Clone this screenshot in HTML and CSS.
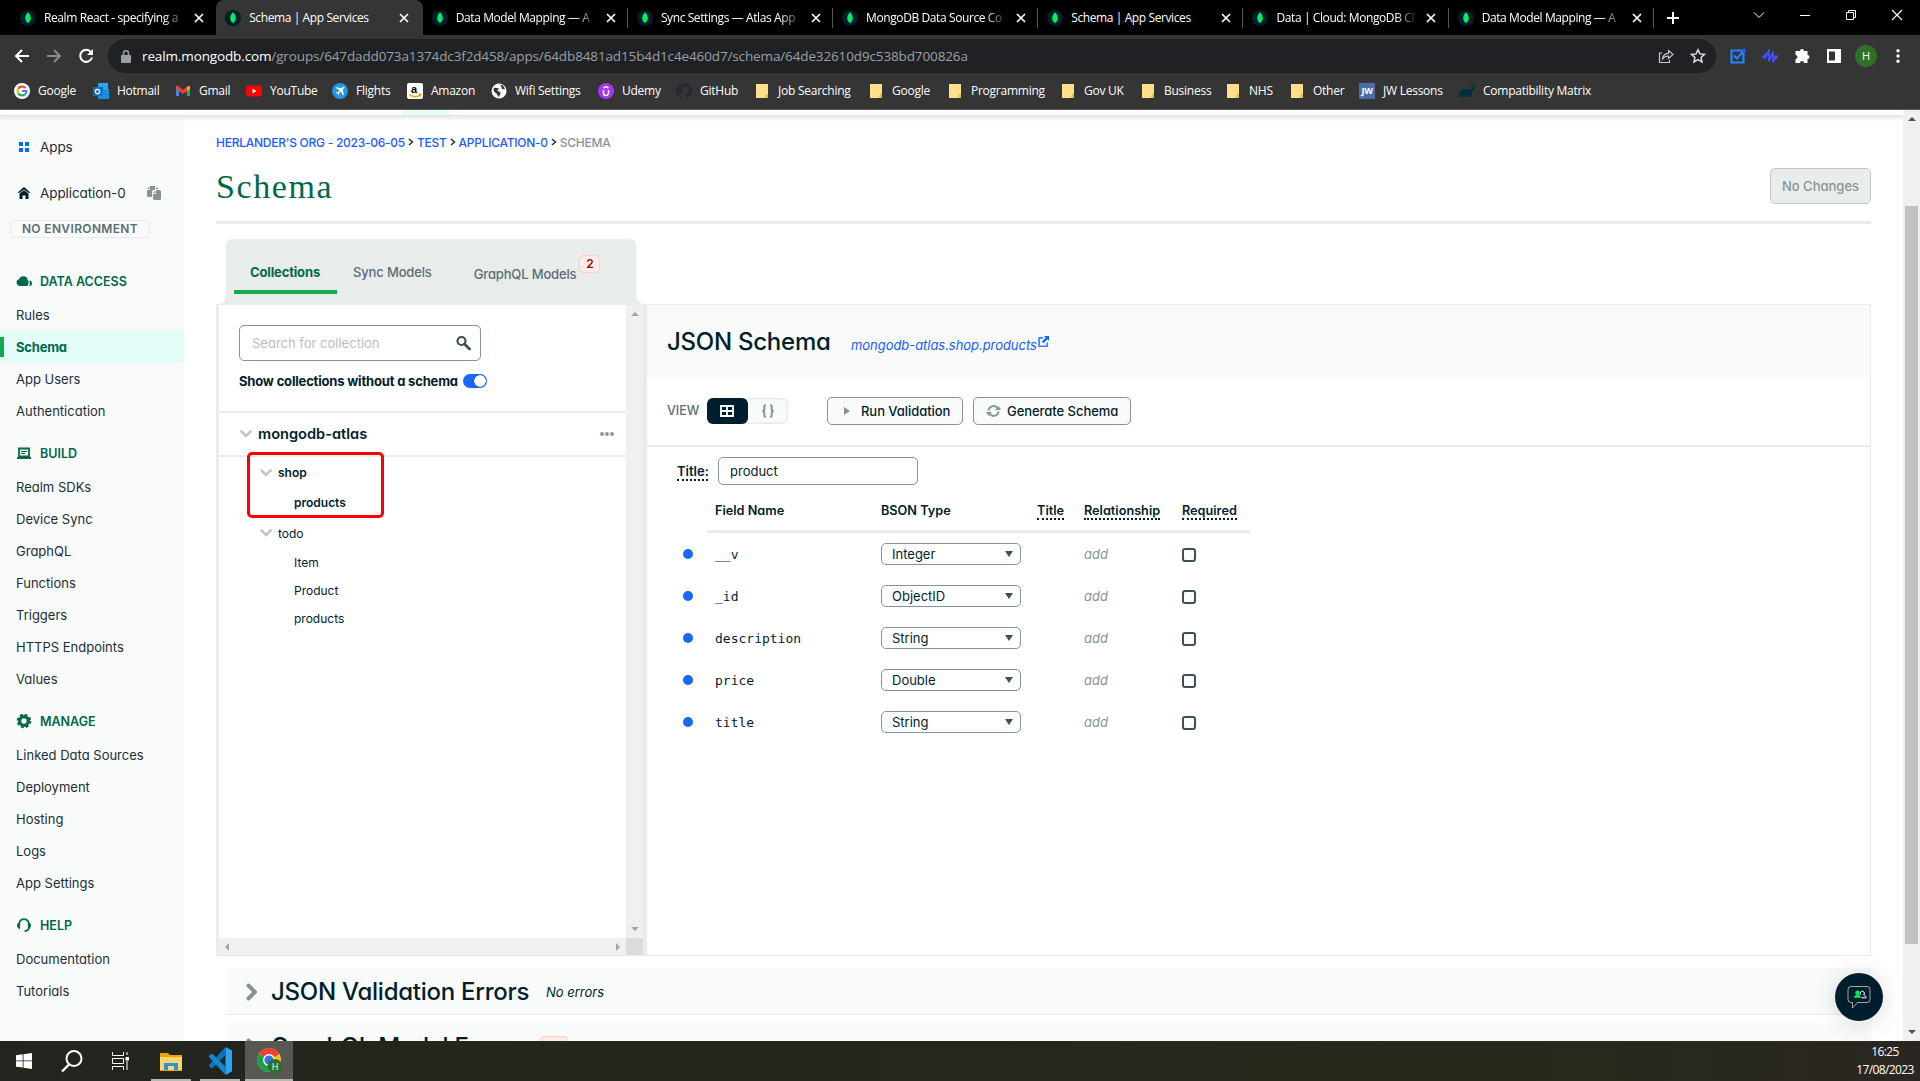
FILE: index.html
```html
<!DOCTYPE html>
<html lang="en">
<head>
  <meta charset="UTF-8">
  <meta name="viewport" content="width=device-width, initial-scale=1.0">
  <title>Schema | App Services</title>
  <link rel="stylesheet" href="styles.css">
</head>
<body>
  <!-- shared icons -->
  <svg width="0" height="0" class="defs">
    <symbol id="leaf" viewBox="0 0 16 16"><circle cx="8" cy="8" r="8" fill="#001e2b"/><path d="M8 2.200C6.300 4 5.200 5.800 5.200 8.200c0 2 1.100 3.500 2.500 4.500l.3 1.300.3-1.300c1.400-1 2.500-2.500 2.500-4.500C10.800 5.800 9.700 4 8 2.200z" fill="#00ed64"/></symbol>
    <symbol id="x" viewBox="0 0 10 10"><path d="M1 1l8 8M9 1l-8 8" stroke="#fff" stroke-width="1.700"/></symbol>
    <symbol id="note" viewBox="0 0 16 16"><path d="M2 1h12v14H2z" fill="#ffe08a"/><path d="M12 11h2v4h-3z" fill="#e6b94a"/></symbol>
    <symbol id="chev" viewBox="0 0 12 8"><path d="M1.500 1.500L6 6l4.500-4.500" fill="none" stroke="#c1c7c6" stroke-width="2.600" stroke-linecap="round"/></symbol>
    <symbol id="right" viewBox="0 0 12 18"><path d="M2.500 2.500L9 9l-6.500 6.500" fill="none" stroke="#889397" stroke-width="4" stroke-linecap="round" stroke-linejoin="round"/></symbol>
  </svg>

  <div class="tabstrip">
    <div class="tab"><svg class="fav"><use href="#leaf"/></svg><span class="tab-title">Realm React - specifying a</span><svg class="tab-x"><use href="#x"/></svg></div>
    <div class="tab active"><svg class="fav"><use href="#leaf"/></svg><span class="tab-title full">Schema | App Services</span><svg class="tab-x"><use href="#x"/></svg></div>
    <div class="tab sep"><svg class="fav"><use href="#leaf"/></svg><span class="tab-title">Data Model Mapping — A</span><svg class="tab-x"><use href="#x"/></svg></div>
    <div class="tab sep"><svg class="fav"><use href="#leaf"/></svg><span class="tab-title">Sync Settings — Atlas App</span><svg class="tab-x"><use href="#x"/></svg></div>
    <div class="tab sep"><svg class="fav"><use href="#leaf"/></svg><span class="tab-title">MongoDB Data Source Co</span><svg class="tab-x"><use href="#x"/></svg></div>
    <div class="tab sep"><svg class="fav"><use href="#leaf"/></svg><span class="tab-title full">Schema | App Services</span><svg class="tab-x"><use href="#x"/></svg></div>
    <div class="tab sep"><svg class="fav"><use href="#leaf"/></svg><span class="tab-title">Data | Cloud: MongoDB Cl</span><svg class="tab-x"><use href="#x"/></svg></div>
    <div class="tab sep"><svg class="fav"><use href="#leaf"/></svg><span class="tab-title">Data Model Mapping — A</span><svg class="tab-x"><use href="#x"/></svg></div>
    <svg class="plus" viewBox="0 0 14 14"><path d="M7 1v12M1 7h12" stroke="#fff" stroke-width="2"/></svg>
    <div class="win-buttons">
      <svg viewBox="0 0 12 12"><path d="M1 3.500l5 5 5-5" fill="none" stroke="#fff"/></svg>
      <svg viewBox="0 0 12 12"><path d="M1 6.500h10" stroke="#fff"/></svg>
      <svg viewBox="0 0 12 12"><path d="M1.500 3.500h7v7h-7zM3.500 3.500v-2h7v7h-2" fill="none" stroke="#fff"/></svg>
      <svg viewBox="0 0 12 12"><path d="M1 1l10 10M11 1L1 11" stroke="#fff" stroke-width="1.200"/></svg>
    </div>
  </div>

  <div class="toolbar">
    <svg class="nav-icon" viewBox="0 0 16 16"><path d="M15 8H2M8 2L2 8l6 6" fill="none" stroke="#fff" stroke-width="2"/></svg>
    <svg class="nav-icon" viewBox="0 0 16 16"><path d="M1 8h13M8 2l6 6-6 6" fill="none" stroke="#8a8a8a" stroke-width="2"/></svg>
    <svg class="nav-icon" viewBox="0 0 16 16"><path d="M13 4.200A6 6 0 1 0 14 9.500" fill="none" stroke="#fff" stroke-width="2"/><path d="M15 1v6H9z" fill="#fff"/></svg>
    <div class="omnibox">
      <svg width="10" height="13" viewBox="0 0 10 13"><path d="M1 5h8a1 1 0 0 1 1 1v6a1 1 0 0 1-1 1H1a1 1 0 0 1-1-1V6a1 1 0 0 1 1-1z" fill="#9aa0a6"/><path d="M2.500 6V3.300a2.500 2.500 0 0 1 5 0V6" fill="none" stroke="#9aa0a6" stroke-width="1.500"/></svg>
      <div class="url"><b>realm.mongodb.com</b>/groups/647dadd073a1374dc3f2d458/apps/64db8481ad15b4d1c4e460d7/schema/64de32610d9c538bd700826a</div>
      <svg width="16" height="16" viewBox="0 0 16 16"><path d="M4 5H1.500v9.500h10V12M4.500 11c.3-3.500 2.500-5.500 6-5.700V2.500L15 6.500l-4.500 4V8c-2.500 0-4.500.8-6 3z" fill="none" stroke="#c4c7c5" stroke-width="1.200"/></svg>
      <svg width="16" height="16" viewBox="0 0 16 16"><path d="M8 1.800l1.900 4.100 4.500.5-3.300 3.100.9 4.500L8 11.700 4 14l.9-4.500L1.600 6.400l4.500-.5z" fill="none" stroke="#dadce0" stroke-width="1.500"/></svg>
    </div>
    <div class="extensions">
      <svg viewBox="0 0 16 16"><path d="M1.500 2.500h12v12h-12z" fill="none" stroke="#2684ff" stroke-width="2.200"/><path d="M4 7.500l3 3 7-8" fill="none" stroke="#2684ff" stroke-width="2.200"/><circle cx="14" cy="2.500" r="2" fill="#2456ff"/></svg>
      <svg viewBox="0 0 16 16"><path d="M1 9.500L3.500 6v4L7 2v11l4-9v10l2.500-6v3L15.500 8" fill="none" stroke="#4353ff" stroke-width="1.700" stroke-linejoin="round" stroke-linecap="round"/></svg>
      <svg viewBox="0 0 16 16"><path d="M6 3a2 2 0 0 1 4 0h3.500v4a2 2 0 0 1 0 4v4H10a2 2 0 0 0-4 0H1.500v-4a2 2 0 0 0 0-4V3z" fill="#fff"/></svg>
      <svg viewBox="0 0 16 16"><path d="M1 1h14v14H1z" fill="#fff"/><path d="M3 3.500h6v9H3z" fill="#353535"/></svg>
      <span class="avatar">H</span>
      <svg viewBox="0 0 16 16"><g fill="#fff"><circle cx="8" cy="2.800" r="1.700"/><circle cx="8" cy="8" r="1.700"/><circle cx="8" cy="13.200" r="1.700"/></g></svg>
    </div>
  </div>

  <div class="bookmarks">
    <div><svg viewBox="0 0 16 16"><circle cx="8" cy="8" r="8" fill="#fff"/><g fill="none" stroke-width="2.200"><path d="M11.400 5A4.500 4.500 0 0 0 4.200 5.700" stroke="#ea4335"/><path d="M4.200 5.700a4.500 4.500 0 0 0 0 4.600" stroke="#fbbc05"/><path d="M4.200 10.300a4.500 4.500 0 0 0 6.700 1.100" stroke="#34a853"/><path d="M10.900 11.400A4.500 4.500 0 0 0 12.500 8H8" stroke="#4285f4"/></g></svg>Google</div>
    <div><svg viewBox="0 0 16 16"><path d="M5 0h10v7H5z" fill="#28a8ea"/><path d="M5 4h5v4H5z" fill="#0364b8"/><path d="M4 9l12-3v10H5z" fill="#1490df"/><path d="M0 4h9v9H0z" fill="#0f6cbd"/><circle cx="4.500" cy="8.500" r="2.200" fill="none" stroke="#fff" stroke-width="1.300"/></svg>Hotmail</div>
    <div><svg viewBox="0 0 16 16"><path d="M1 4h3v9H1z" fill="#4285f4"/><path d="M12 4h3v9h-3z" fill="#34a853"/><path d="M1 3l1.500-.5L8 7l5.500-4.500L15 3v3L8 11 1 6z" fill="#ea4335"/><path d="M12 4.200L15 3v3l-3 2z" fill="#fbbc04"/></svg>Gmail</div>
    <div><svg viewBox="0 0 16 16"><rect y="2.500" width="16" height="11" rx="3" fill="#f00"/><path d="M6.500 5.500v5l4-2.500z" fill="#fff"/></svg>YouTube</div>
    <div><svg viewBox="0 0 16 16"><circle cx="8" cy="8" r="8" fill="#2196e3"/><path d="M12.500 3.500c-1-.3-1.500.3-3 1.800l-5-1-.8.800 3.800 2.200-1.700 1.900-1.500-.2-.6.600 1.900.9.900 1.900.6-.6-.200-1.500 1.900-1.700 2.200 3.800.8-.8-1-5c1.500-1.500 2-2.200 1.700-3.100z" fill="#fff"/></svg>Flights</div>
    <div><svg viewBox="0 0 16 16"><rect width="16" height="16" rx="2" fill="#fff"/><text x="4" y="10" class="az">a</text><path d="M2 11.500c4 2.800 8 2.800 11 .5M11.500 11.500l2.200-.2-.7 2.200" fill="none" stroke="#f90" stroke-width="1.300"/></svg>Amazon</div>
    <div><svg viewBox="0 0 16 16"><circle cx="8" cy="8" r="7.500" fill="#fff"/><path d="M3 5c2-.5 3 .5 4.500 0 .5 1.500-1 1.500-1 3 1 .5 3 .5 3 2.200 0 1.500-1.500 1.800-1.500 3.800-1.500-.5-1.500-3-2.500-3.500S3.500 9.500 2.500 7zM9.500 1.500c0 1.500 1 1.500 1 3s1.500 2 3.500 1.500L12 2.500z" fill="#353535"/></svg>Wifi Settings</div>
    <div><svg viewBox="0 0 16 16"><circle cx="8" cy="8" r="8" fill="#a435f0"/><path d="M5.500 7v3a2.500 2.500 0 0 0 5 0V7M5.500 5L8 3.500 10.500 5" fill="none" stroke="#fff" stroke-width="1.500"/></svg>Udemy</div>
    <div><svg viewBox="0 0 16 16"><path d="M8 0a8 8 0 0 0-2.500 15.600v-3C3.500 13 3 11.500 3 11.500M8 0a8 8 0 0 1 2.500 15.600v-3.400c0-1-.3-1.400-.3-1.400 2-.3 3-1.300 3-3.300 0-1-.5-1.800-.9-2.200V3.400l-2 .8a7 7 0 0 0-4.600 0l-2-.8v1.900c-.4.400-.9 1.200-.9 2.200 0 2 1 3 3 3.300z" fill="#24292f"/></svg>GitHub</div>
    <div><svg><use href="#note"/></svg>Job Searching</div>
    <div><svg><use href="#note"/></svg>Google</div>
    <div><svg><use href="#note"/></svg>Programming</div>
    <div><svg><use href="#note"/></svg>Gov UK</div>
    <div><svg><use href="#note"/></svg>Business</div>
    <div><svg><use href="#note"/></svg>NHS</div>
    <div><svg><use href="#note"/></svg>Other</div>
    <div><span class="jw">JW</span>JW Lessons</div>
    <div><svg viewBox="0 0 16 16"><path d="M0 14c0-5 2-8 6-8 2 0 3 .5 4.500.5C12.500 6.500 14 5.500 14 4c0-1-1.500-1-1.500 0L11.300 3.500C11.500 1.500 16 1.500 16 4.500 16 7.500 13.500 8 13 10v4h-2l-.5-2-1 2h-2L7 12l-1.500 2h-2L3 12l-1.500 2z" fill="#02303a"/></svg>Compatibility Matrix</div>
  </div>

  <div class="page">
    <div class="viewport">
      <div class="topnav"><span class="topnav-active"></span></div>

      <div class="columns">
        <nav class="sidebar">
          <div class="side-top apps">
            <svg width="16" height="16" viewBox="0 0 16 16"><path d="M3 3h4v4H3zM9 3h4v4H9zM3 9h4v4H3zM9 9h4v4H9z" fill="#016bf8"/></svg>Apps
          </div>
          <div class="side-top application">
            <svg width="16" height="16" viewBox="0 0 16 16"><path d="M8 2l6 5.300-.8 1L8 4.500 2.800 8.300l-.8-1z" fill="#001e2b"/><path d="M8 5.200L12.500 8.500V14h-3v-3.500h-3V14h-3V8.500z" fill="#001e2b"/></svg>Application-0
            <svg class="copy" width="16" height="16" viewBox="0 0 16 16"><path d="M4 1h5v4H7.500A1.500 1.500 0 0 0 6 6.500V12H2.500A1.500 1.500 0 0 1 1 10.500V5h3z" fill="#889397"/><path d="M1 4l2.500-2.500V4z" fill="#889397"/><path d="M10 5h3.500A1.500 1.500 0 0 1 15 6.500v7a1.500 1.500 0 0 1-1.500 1.500h-5A1.500 1.500 0 0 1 7 13.500V9h3z" fill="#889397"/><path d="M7 8l2.300-2.500V8zM10 2l3 2h-3z" fill="#889397"/></svg>
          </div>
          <div class="env">NO ENVIRONMENT</div>

          <h4><svg viewBox="0 0 16 16"><path d="M3.500 13A3.500 3.500 0 0 1 3 6.200 4.500 4.500 0 0 1 11.700 7c1 1 1 1.500.8 3.500L11.500 13z" fill="#00684a"/><path d="M13 7.500c2 0 3 1.200 3 3S15 13 13 13c1-1.800 1-3.500 0-5.500z" fill="#00684a"/></svg>DATA ACCESS</h4>
          <a>Rules</a>
          <a class="current">Schema</a>
          <a>App Users</a>
          <a>Authentication</a>

          <h4><svg viewBox="0 0 16 16"><path d="M3 3.500h10v8H3z" fill="none" stroke="#00684a" stroke-width="1.800"/><path d="M1 12h14v2H1zM5 6h6v1H5zM5 8h4v1H5z" fill="#00684a"/></svg>BUILD</h4>
          <a>Realm SDKs</a>
          <a>Device Sync</a>
          <a>GraphQL</a>
          <a>Functions</a>
          <a>Triggers</a>
          <a>HTTPS Endpoints</a>
          <a>Values</a>

          <h4><svg viewBox="0 0 16 16"><circle cx="8" cy="8" r="4.300" fill="none" stroke="#00684a" stroke-width="3.200"/><circle cx="8" cy="8" r="6.300" fill="none" stroke="#00684a" stroke-width="2" stroke-dasharray="2.800 2.150"/></svg>MANAGE</h4>
          <a>Linked Data Sources</a>
          <a>Deployment</a>
          <a>Hosting</a>
          <a>Logs</a>
          <a>App Settings</a>

          <h4><svg viewBox="0 0 16 16"><path d="M3.500 8.500a4.800 4.800 0 1 1 9 0" fill="none" stroke="#00684a" stroke-width="1.800"/><path d="M1 8c0-2 1.500-2 3-1.500v5.500C2.500 12 1 10.500 1 8zM15 8c0-2-1.500-2-3-1.500v5.500c1.500 0 3-1.500 3-4z" fill="#00684a"/><path d="M13 11c-.5 2-2 3-4.500 3" fill="none" stroke="#00684a" stroke-width="1.600"/></svg>HELP</h4>
          <a>Documentation</a>
          <a>Tutorials</a>
        </nav>

        <main>
          <div class="crumbs"><a>HERLANDER'S ORG - 2023-06-05</a><svg viewBox="0 0 6 8"><path d="M1 1l3.500 3L1 7" fill="none" stroke="#21313c" stroke-width="1.500"/></svg><a>TEST</a><svg viewBox="0 0 6 8"><path d="M1 1l3.500 3L1 7" fill="none" stroke="#21313c" stroke-width="1.500"/></svg><a>APPLICATION-0</a><svg viewBox="0 0 6 8"><path d="M1 1l3.500 3L1 7" fill="none" stroke="#21313c" stroke-width="1.500"/></svg><span>SCHEMA</span></div>
          <div class="title-row">
            <h1>Schema</h1>
            <button class="no-changes" disabled>No Changes</button>
          </div>

          <div class="model-tabs">
            <span class="model-tab on">Collections</span>
            <span class="model-tab">Sync Models</span>
            <span class="model-tab graphql">GraphQL Models<i class="count">2</i></span>
          </div>

          <div class="panel">
            <div class="tree">
              <div class="tree-body">
                <div class="tree-head">
                  <div class="search">Search for collection
                    <svg width="16" height="16" viewBox="0 0 16 16"><circle cx="6.500" cy="6" r="4" fill="none" stroke="#3d4f58" stroke-width="2.200"/><path d="M9.500 9l5 5" stroke="#3d4f58" stroke-width="2.800" stroke-linecap="round"/></svg>
                  </div>
                  <div class="show-row"><span>Show collections without a schema</span><i class="switch"></i></div>
                </div>
                <div class="source"><svg class="chev"><use href="#chev"/></svg><span>mongodb-atlas</span>
                  <svg class="dots" width="14" height="4" viewBox="0 0 14 4"><g fill="#889397"><circle cx="2" cy="2" r="1.900"/><circle cx="7" cy="2" r="1.900"/><circle cx="12" cy="2" r="1.900"/></g></svg>
                </div>
                <div class="highlight"></div>
                <div class="db strong"><svg class="chev"><use href="#chev"/></svg>shop</div>
                <div class="coll strong first">products</div>
                <div class="db"><svg class="chev"><use href="#chev"/></svg>todo</div>
                <div class="coll">Item</div>
                <div class="coll">Product</div>
                <div class="coll">products</div>
              </div>
              <div class="vscroll"><i class="up"></i><i class="down"></i></div>
              <div class="hscroll"><i class="left"></i><i class="rightward"></i></div>
              <div class="corner"></div>
            </div>

            <section class="schema">
              <header>
                <h2>JSON Schema</h2>
                <a class="ns">mongodb-atlas.shop.products</a>
                <svg class="ext" viewBox="0 0 10 10"><path d="M4.500 1.700H1v7.600h7.400V6" fill="none" stroke="#3d7cf5" stroke-width="1.500"/><path d="M5.500 0H10v4.500L8.500 3 5 6.500 3.500 5 7 1.500z" fill="#016bf8"/></svg>
              </header>
              <div class="actions">
                <span class="view-label">VIEW</span>
                <div class="segmented">
                  <span class="seg on"><svg width="14" height="12" viewBox="0 0 14 12"><path d="M1 1h12v10H1zM7 1v10M1 6h12" fill="none" stroke="#fff" stroke-width="1.800"/></svg></span>
                  <span class="seg"><svg width="14" height="14" viewBox="0 0 14 14"><path d="M5 1.200C2.500 1 3.500 3 3.300 5.300 3.200 6.500 2.300 7 1.300 7c1 0 1.900.5 2 1.700C3.500 11 2.500 13 5 12.800M9 1.200c2.500-.2 1.500 1.800 1.700 4.100C10.800 6.500 11.700 7 12.700 7c-1 0-1.900.5-2 1.700-.2 2.300.8 4.300-1.700 4.100" fill="none" stroke="#889397" stroke-width="2"/></svg></span>
                </div>
                <button class="run"><svg width="6" height="8" viewBox="0 0 6 8"><path d="M0 0l6 4-6 4z" fill="#889397"/></svg>Run Validation</button>
                <button class="generate"><svg width="15" height="14" viewBox="0 0 15 14"><path d="M2.500 6.500a5 5 0 0 1 8.700-2.700M12.500 7.500a5 5 0 0 1-8.700 2.700" fill="none" stroke="#889397" stroke-width="2"/><path d="M9 6h6l-2.500-4zM6 8H0l2.500 4z" fill="#889397"/></svg>Generate Schema</button>
              </div>
              <div class="title-field"><span class="dotted">Title:</span><div class="input">product</div></div>
              <div class="row head">
                <span></span><span>Field Name</span><span>BSON Type</span><span><u>Title</u></span><span><u>Relationship</u></span><span><u>Required</u></span>
              </div>
              <div class="rows">
                <div class="row"><i class="dot"></i><code>__v</code><div class="select">Integer</div><span></span><em>add</em><i class="check"></i></div>
                <div class="row"><i class="dot"></i><code>_id</code><div class="select">ObjectID</div><span></span><em>add</em><i class="check"></i></div>
                <div class="row"><i class="dot"></i><code>description</code><div class="select">String</div><span></span><em>add</em><i class="check"></i></div>
                <div class="row"><i class="dot"></i><code>price</code><div class="select">Double</div><span></span><em>add</em><i class="check"></i></div>
                <div class="row"><i class="dot"></i><code>title</code><div class="select">String</div><span></span><em>add</em><i class="check"></i></div>
              </div>
            </section>
          </div>

          <div class="errors"><svg class="right"><use href="#right"/></svg><h2>JSON Validation Errors</h2><em>No errors</em></div>
          <div class="errors second"><svg class="right"><use href="#right"/></svg><h2>GraphQL Model Errors</h2><i class="count">2</i></div>
        </main>
      </div>

      <div class="chat">
        <svg width="26" height="26" viewBox="0 0 26 26"><path d="M4 2.500h16a3 3 0 0 1 3 3v10a3 3 0 0 1-3 3h-9.500L5.500 24v-5.500H4a3 3 0 0 1-3-3v-10a3 3 0 0 1 3-3z" fill="none" stroke="#c1ccd0" stroke-width=".8"/><circle cx="10.500" cy="8.800" r="2.300" fill="#00ed64"/><path d="M7 13.800c.2-2 1.500-3 3.500-3s3.200 1 3.400 3z" fill="#00ed64"/><path d="M13.800 10.800a2.100 2.100 0 1 1 2.800.2c1.500.3 2.400 1.200 2.500 2.800h-4.600" fill="none" stroke="#fff"/></svg>
      </div>
    </div>
    <div class="page-scroll"><i class="up"></i><span class="thumb"></span><i class="down"></i></div>
  </div>

  <div class="taskbar">
    <div class="task start"><svg width="16" height="16" viewBox="0 0 16 16"><path d="M0 2.300l6.700-1v6.200H0zM7.500 1.200L16 0v7.500H7.500zM0 8.300h6.700v6.300L0 13.700zM7.500 8.300H16V16l-8.500-1.200z" fill="#fff"/></svg></div>
    <div class="task"><svg width="24" height="24" viewBox="0 0 24 24"><circle cx="14" cy="9.500" r="7.500" fill="none" stroke="#fff" stroke-width="2"/><path d="M9 15.500L2 22.500" stroke="#fff" stroke-width="2.400"/></svg></div>
    <div class="task"><svg width="17" height="18" viewBox="0 0 17 18"><path d="M.5 0v3.500h11V0M.5 18v-3.500h11V18M.5 6.500h11v5H.5zM15 0v3M15 9v9" fill="none" stroke="#fff"/><path d="M13.500 5H17v3.500h-3.500z" fill="#fff"/></svg></div>
    <div class="task open folder"><svg width="22" height="19" viewBox="0 0 22 19"><path d="M0 1h8l2 2h12v16H0z" fill="#e8a600"/><path d="M0 5h22v13H0z" fill="#ffd667"/><path d="M4 11h14v7h-4v-4H8v4H4z" fill="#2e8fe0"/></svg></div>
    <div class="task open code"><svg width="24" height="28" viewBox="0 0 24 24" preserveAspectRatio="none"><path d="M17.500 0L24 3v18l-6.500 3z" fill="#2aa7f0"/><path d="M17.500 0v7L4 18.500 1 16.500v-1z" fill="#0b73bd"/><path d="M17.500 24v-7L4 5.500 1 7.500v1z" fill="#1187d2"/></svg></div>
    <div class="task open chrome"><svg width="26" height="26" viewBox="0 0 26 26"><circle cx="12" cy="12" r="12" fill="#fbc116"/><path d="M12 12L1.600 6A12 12 0 0 1 22.400 6z" fill="#ea4335"/><path d="M12 12L1.600 6A12 12 0 0 0 12 24z" fill="#1e9e4a"/><circle cx="12" cy="12" r="6" fill="#fff"/><circle cx="12" cy="12" r="4.600" fill="#2f73e8"/><circle cx="18" cy="18.500" r="7.500" fill="#2f7126"/><text x="18" y="22" class="badge-h">H</text></svg></div>
    <div class="clock"><div>16:25</div><div>17/08/2023</div></div>
  </div>
</body>
</html>
```
FILE: styles.css
```css
* {
  box-sizing: border-box;
}
body {
  margin: 0;
  width: 1920px;
  height: 1081px;
  overflow: hidden;
  background: #fff;
  color: #001e2b;
  font-family: Inter, Lato, sans-serif;
  font-feature-settings: "cv11";
  font-size: 13px;
}
svg {
  display: block;
  flex: none;
}
.defs {
  position: absolute;
}
h1, h2, h4 {
  margin: 0;
}

/* browser chrome */
.tabstrip, .toolbar, .bookmarks, .taskbar {
  font-family: "Open Sans", "Noto Sans", sans-serif;
  font-feature-settings: normal;
  color: #fff;
}
.tabstrip {
  display: flex;
  height: 35px;
  padding-left: 11px;
  background: #000;
}
.tab {
  display: flex;
  align-items: center;
  width: 205.200px;
  height: 35px;
  padding-left: 9px;
  font-size: 12px;
  letter-spacing: -0.4px;
}
.tab.active {
  width: 206.500px;
  background: #353535;
  border-radius: 8px 8px 0 0;
}
.tab.sep {
  background: linear-gradient(#555, #555) right center / 1px 20px no-repeat;
}
.fav {
  width: 16px;
  height: 16px;
}
.tab-title {
  width: 142px;
  margin: 0 8px;
  white-space: nowrap;
  -webkit-mask-image: linear-gradient(90deg, #000 84%, transparent);
}
.tab-title.full {
  -webkit-mask-image: none;
}
.tab-x {
  width: 10px;
  height: 10px;
}
.plus {
  width: 14px;
  height: 14px;
  margin: 11px 0 0 12px;
}
.win-buttons {
  display: flex;
  gap: 34px;
  margin: 9px 17px 0 auto;
}
.win-buttons svg {
  width: 12px;
  height: 12px;
}
.toolbar {
  display: flex;
  align-items: center;
  height: 42px;
  padding-left: 14px;
  background: #353535;
}
.nav-icon {
  width: 16px;
  height: 16px;
  margin-right: 16px;
}
.omnibox {
  display: flex;
  align-items: center;
  width: 1608px;
  height: 34px;
  margin-left: -2px;
  padding: 0 10px 0 13px;
  gap: 16px;
  border-radius: 17px;
  background: #202124;
}
.url {
  flex: 1;
  margin-left: -5px;
  color: #9aa0a6;
  font-size: 13.500px;
  letter-spacing: -0.13px;
}
.url b {
  color: #fff;
  font-weight: 400;
}
.extensions {
  display: flex;
  align-items: center;
  gap: 16px;
  margin-left: 14px;
}
.extensions svg {
  width: 16px;
  height: 16px;
}
.avatar {
  width: 22px;
  height: 22px;
  margin: 0 -3px;
  border-radius: 50%;
  background: #2f7126;
  font-size: 11px;
  line-height: 22px;
  text-align: center;
}
.bookmarks {
  display: grid;
  grid-template-columns: 79px 82px 71px 86px 75px 84px 107px 78px 78px 114px 79px 113px 80px 85px 64px 70px 100px 1fr;
  height: 33px;
  padding-left: 14px;
  border-bottom: 1px solid #5a5a5a;
  background: #353535;
  font-size: 12px;
  letter-spacing: -0.25px;
}
.bookmarks div {
  display: flex;
  align-items: center;
  gap: 8px;
  height: 27px;
  white-space: nowrap;
}
.bookmarks svg {
  width: 16px;
  height: 16px;
}
.az {
  font: bold 11px Arial, sans-serif;
}
.jw {
  width: 16px;
  height: 16px;
  background: #4a6da7;
  font-size: 9px;
  font-weight: 700;
  line-height: 16px;
  text-align: center;
}

/* page */
.page {
  display: flex;
  height: 931px;
}
.viewport {
  position: relative;
  width: 1903px;
  height: 931px;
  overflow: hidden;
}
.topnav {
  position: relative;
  height: 5px;
  padding-left: 402px;
  background: #fff;
  box-shadow: 0 2px 4px 1px #dfe4e3;
}
.topnav-active {
  display: block;
  width: 47px;
  height: 5px;
  background: #e3fcf7;
}
.columns {
  display: flex;
}
.sidebar {
  width: 184px;
  height: 926px;
  background: #f9fbfa;
  color: #1c2d38;
}
.side-top {
  display: flex;
  align-items: center;
  height: 32px;
  padding-left: 16px;
  gap: 8px;
  font-size: 13.500px;
  letter-spacing: -0.1px;
}
.apps {
  margin-top: 16px;
}
.application {
  margin-top: 14px;
}
.copy {
  margin-left: 12px;
}
.env {
  width: 140px;
  height: 18px;
  margin: 11px 0 22px 10px;
  border: 1px solid #e8edeb;
  border-radius: 4px;
  color: #5c6c75;
  font-size: 12px;
  font-weight: 600;
  letter-spacing: 0.35px;
  line-height: 16px;
  text-align: center;
}
.sidebar h4 {
  display: flex;
  align-items: center;
  gap: 8px;
  height: 35px;
  margin-top: 9px;
  padding: 0 0 1px 16px;
  color: #00684a;
  font-size: 12.500px;
  font-weight: 600;
}
.sidebar .env + h4 {
  margin-top: 26px;
}
.sidebar h4 svg {
  width: 16px;
  height: 16px;
}
.sidebar a {
  display: block;
  height: 32px;
  padding-left: 16px;
  line-height: 32px;
}
.sidebar a.current {
  background: linear-gradient(#13aa52, #13aa52) -4px center / 8px 20px no-repeat, #e3fcf7;
  color: #00684a;
  font-weight: 700;
  letter-spacing: -0.2px;
}
main {
  width: 1655px;
  margin-left: 32px;
}
.crumbs {
  display: flex;
  align-items: center;
  gap: 3px;
  height: 16px;
  margin-top: 19px;
  color: #889397;
  font-size: 12px;
  font-weight: 500;
  letter-spacing: -0.26px;
}
.crumbs a {
  color: #1a5cff;
}
.crumbs svg {
  width: 6px;
  height: 8px;
}
.title-row {
  display: flex;
  justify-content: space-between;
  height: 74px;
  padding-top: 18px;
  border-bottom: 3px solid #e8edeb;
}
h1 {
  color: #00684a;
  font: 400 34px/38px "Liberation Serif", serif;
  letter-spacing: 1.600px;
}
.no-changes {
  width: 101px;
  height: 36px;
  padding: 0;
  border: 1px solid #c1c7c6;
  border-radius: 5px;
  background: #e8edeb;
  color: #889397;
  font: 500 13px Inter, sans-serif;
  font-feature-settings: "cv11";
}
.model-tabs {
  position: relative;
  display: flex;
  width: 410px;
  height: 65px;
  margin: 15px 0 0 10px;
  padding: 0 8px;
  border-radius: 6px 6px 0 0;
  background: #e8edeb;
}
/* flared bottom corners */
.model-tabs::before, .model-tabs::after {
  content: "";
  position: absolute;
  bottom: 0;
  width: 8px;
  height: 8px;
}
.model-tabs::before {
  left: -8px;
  background: radial-gradient(circle at 0 0, transparent 7.500px, #e8edeb 8px);
}
.model-tabs::after {
  right: -8px;
  background: radial-gradient(circle at 100% 0, transparent 7.500px, #e8edeb 8px);
}
.model-tab {
  height: 55px;
  padding: 0 16px;
  color: #5c6c75;
  font-weight: 500;
  letter-spacing: -0.15px;
  line-height: 67px;
  white-space: nowrap;
}
.model-tab.on {
  width: 103px;
  background: linear-gradient(#13aa52, #13aa52) bottom / 100% 4px no-repeat;
  color: #00684a;
  font-weight: 700;
}
.model-tab.graphql {
  display: flex;
  padding-left: 26px;
  line-height: 70px;
}
.count {
  width: 21px;
  height: 18px;
  margin: 16px 0 0 3px;
  border: 1px solid #ffcdc7;
  border-radius: 4px;
  background: #ffeae5;
  color: #970606;
  font-style: normal;
  font-weight: 600;
  font-size: 12px;
  line-height: 16px;
  text-align: center;
}
.panel {
  display: flex;
  height: 652px;
  border: 1px solid #e8edeb;
  border-left-width: 3px;
}
.tree {
  display: grid;
  grid-template: 633px 17px / 407px 17px;
  width: 428px;
  border-right: 4px solid #e8edeb;
}
.tree-body {
  position: relative;
}
.tree-head {
  height: 108px;
  padding: 20px 20px 0;
  border-bottom: 2px solid #e8edeb;
}
.search {
  display: flex;
  align-items: center;
  justify-content: space-between;
  width: 242px;
  height: 36px;
  padding: 0 9px 0 12px;
  border: 1px solid #889397;
  border-radius: 5px;
  color: #b8c0c0;
}
.show-row {
  display: flex;
  align-items: center;
  gap: 6px;
  margin-top: 12px;
  font-weight: 700;
}
.show-row span {
  width: 218px;
  letter-spacing: -0.18px;
  white-space: nowrap;
}
.switch {
  width: 24px;
  height: 14px;
  border-radius: 7px;
  background: radial-gradient(circle at 17px 7px, #fff 5.500px, #1a66f5 6px);
}
.source {
  display: flex;
  align-items: center;
  height: 44px;
  padding: 0 12px 1px 21px;
  border-bottom: 2px solid #e8edeb;
  font-size: 14.600px;
  font-weight: 600;
}
.dots {
  margin-left: auto;
}
.chev {
  width: 12px;
  height: 8px;
  margin-right: 6px;
}
.highlight {
  position: absolute;
  left: 28px;
  top: 147px;
  width: 137px;
  height: 66px;
  border: 3px solid #f00;
  border-radius: 5px;
}
.db {
  display: flex;
  align-items: center;
  height: 32px;
  padding-left: 41px;
  font-size: 12px;
}
.source + .highlight + .db {
  height: 31px;
}
.coll {
  height: 28px;
  padding-left: 75px;
  font-size: 12px;
  line-height: 28px;
}
.coll.first {
  height: 29px;
  line-height: 29px;
}
.strong {
  font-weight: 600;
}
.vscroll, .hscroll {
  display: flex;
  justify-content: space-between;
  align-items: center;
  padding: 7px 0;
  background: #f0f0f0;
}
.vscroll {
  flex-direction: column;
}
.hscroll {
  padding: 0 6px;
}
.up, .down, .left, .rightward {
  border: 4px solid transparent;
}
.up {
  border-top: 0;
  border-bottom-color: #a3a3a3;
}
.down {
  border-bottom: 0;
  border-top-color: #a3a3a3;
}
.left {
  border-left: 0;
  border-right-color: #a3a3a3;
}
.rightward {
  border-right: 0;
  border-left-color: #a3a3a3;
}
.corner {
  background: #dcdcdc;
}

.schema {
  flex: 1;
}
.schema header {
  display: flex;
  align-items: center;
  height: 72px;
  padding-left: 20px;
  background: #f9fbfa;
}
h2 {
  font-size: 24px;
  font-weight: 500;
  letter-spacing: -0.25px;
  white-space: nowrap;
}
.schema h2 {
  width: 184px;
}
.ns {
  width: 186px;
  margin-top: 8px;
  color: #1a5cff;
  font-style: italic;
  letter-spacing: -0.05px;
  white-space: nowrap;
}
.ext {
  width: 11px;
  height: 11px;
  margin-left: 1px;
}
.actions {
  display: flex;
  align-items: center;
  height: 70px;
  padding-left: 20px;
  border-bottom: 2px solid #e8edeb;
}
.view-label {
  width: 40px;
  margin-top: -1px;
  color: #5c6c75;
  font-size: 12.500px;
  font-weight: 500;
}
.segmented {
  display: flex;
  width: 81px;
  height: 26px;
  margin-right: 39px;
  border-radius: 6px;
  background: #f9fbfa;
  box-shadow: inset 0 0 2px 1px #dde3e1;
}
.seg {
  display: flex;
  align-items: center;
  justify-content: center;
  width: 40px;
  padding-bottom: 1px;
}
.seg.on {
  width: 41px;
  padding-right: 2px;
  border-radius: 6px;
  background: #001e2b;
}
.actions button {
  display: flex;
  align-items: center;
  height: 28px;
  padding: 0;
  border: 1px solid #889397;
  border-radius: 5px;
  background: #f9fbfa;
  color: #001e2b;
  font: 500 13px Inter, sans-serif;
  font-feature-settings: "cv11";
  letter-spacing: -0.05px;
  white-space: nowrap;
}
.run {
  width: 136px;
  margin-right: 10px;
}
.run svg {
  margin: 0 11px 0 16px;
}
.generate {
  width: 158px;
}
.generate svg {
  margin: 0 6px 0 12px;
}
.title-field {
  display: flex;
  align-items: center;
  height: 28px;
  margin: 10px 0 0 30px;
}
.dotted, u {
  border-bottom: 2px dotted #001e2b;
  font-weight: 600;
  text-decoration: none;
}
.title-field .dotted {
  width: 31px;
  margin: 2px 10px 0 0;
}
.input {
  width: 200px;
  height: 28px;
  padding-left: 11px;
  border: 1px solid #889397;
  border-radius: 5px;
  line-height: 27px;
}
.row {
  display: grid;
  grid-template-columns: 32px 166px 156px 47px 98px 58px;
  align-items: center;
  width: 567px;
  height: 42px;
  margin-left: 36px;
}
.row.head {
  height: 48px;
  padding-top: 2px;
  background: linear-gradient(#e8edeb, #e8edeb) 24px 100% / 543px 3px no-repeat;
  font-size: 12.700px;
  font-weight: 600;
}
.row.head span {
  white-space: nowrap;
}
.dot {
  width: 10px;
  height: 10px;
  border-radius: 50%;
  background: #1a66f5;
}
code {
  font: 13px "DejaVu Sans Mono", monospace;
}
.select {
  display: flex;
  justify-content: space-between;
  width: 140px;
  height: 22px;
  padding: 0 7px 0 10px;
  border: 1px solid #889397;
  border-radius: 5px;
  line-height: 21px;
}
.select::after {
  content: "";
  height: 0;
  margin-top: 7px;
  border: 4.500px solid transparent;
  border-top: 6px solid #3d4f58;
  border-bottom: 0;
}
.row em {
  color: #889397;
}
.check {
  width: 14px;
  height: 14px;
  margin-top: 2px;
  border: 2px solid #3d4f58;
  border-radius: 3px;
}

.errors {
  display: flex;
  align-items: center;
  height: 47px;
  margin: 12px 0 0 10px;
  padding: 1px 0 0 20px;
  border-bottom: 1px solid #e8edeb;
  background: #f9fbfa;
}
.errors h2 {
  width: 259px;
  margin: 0 16px 0 13px;
}
.errors.second {
  margin-top: 8px;
}
.errors .right {
  width: 12px;
  height: 18px;
}
.errors .count {
  width: 28px;
  height: 26px;
  margin: 4px 0 0 -6px;
  line-height: 24px;
}
.chat {
  position: absolute;
  left: 1835px;
  top: 863px;
  display: flex;
  align-items: center;
  justify-content: center;
  width: 48px;
  height: 48px;
  padding-left: 2px;
  border-radius: 50%;
  background: #001e2b;
  box-shadow: 0 2px 24px rgba(0, 0, 0, 0.15);
}
.page-scroll {
  display: flex;
  flex-direction: column;
  align-items: center;
  width: 17px;
  padding: 7px 0;
  background: #f0f0f0;
}
.page-scroll .up {
  border-bottom-color: #505050;
}
.page-scroll .down {
  margin-top: auto;
  border-top-color: #505050;
}
.thumb {
  width: 13px;
  height: 738px;
  margin-top: 85px;
  background: #c1c1c1;
}

.taskbar {
  display: flex;
  height: 40px;
  background: linear-gradient(90deg, #23241e, #262a1c 80%, #2b2622);
}
.task {
  display: flex;
  align-items: center;
  justify-content: center;
  width: 48px;
}
.task.open {
  width: 40px;
  margin-left: 9px;
  padding-top: 2px;
  border-bottom: 2px solid #b9b8b2;
}
.task.folder {
  margin-left: 7px;
}
.task.chrome {
  width: 48px;
  margin-left: 5px;
  padding-left: 2px;
  background: #565851;
}
.badge-h {
  fill: #fff;
  font-size: 9px;
  text-anchor: middle;
}
.clock {
  width: 70px;
  margin-left: auto;
  padding-top: 2px;
  font-size: 12px;
  letter-spacing: -0.6px;
  line-height: 18px;
  text-align: center;
}
```
